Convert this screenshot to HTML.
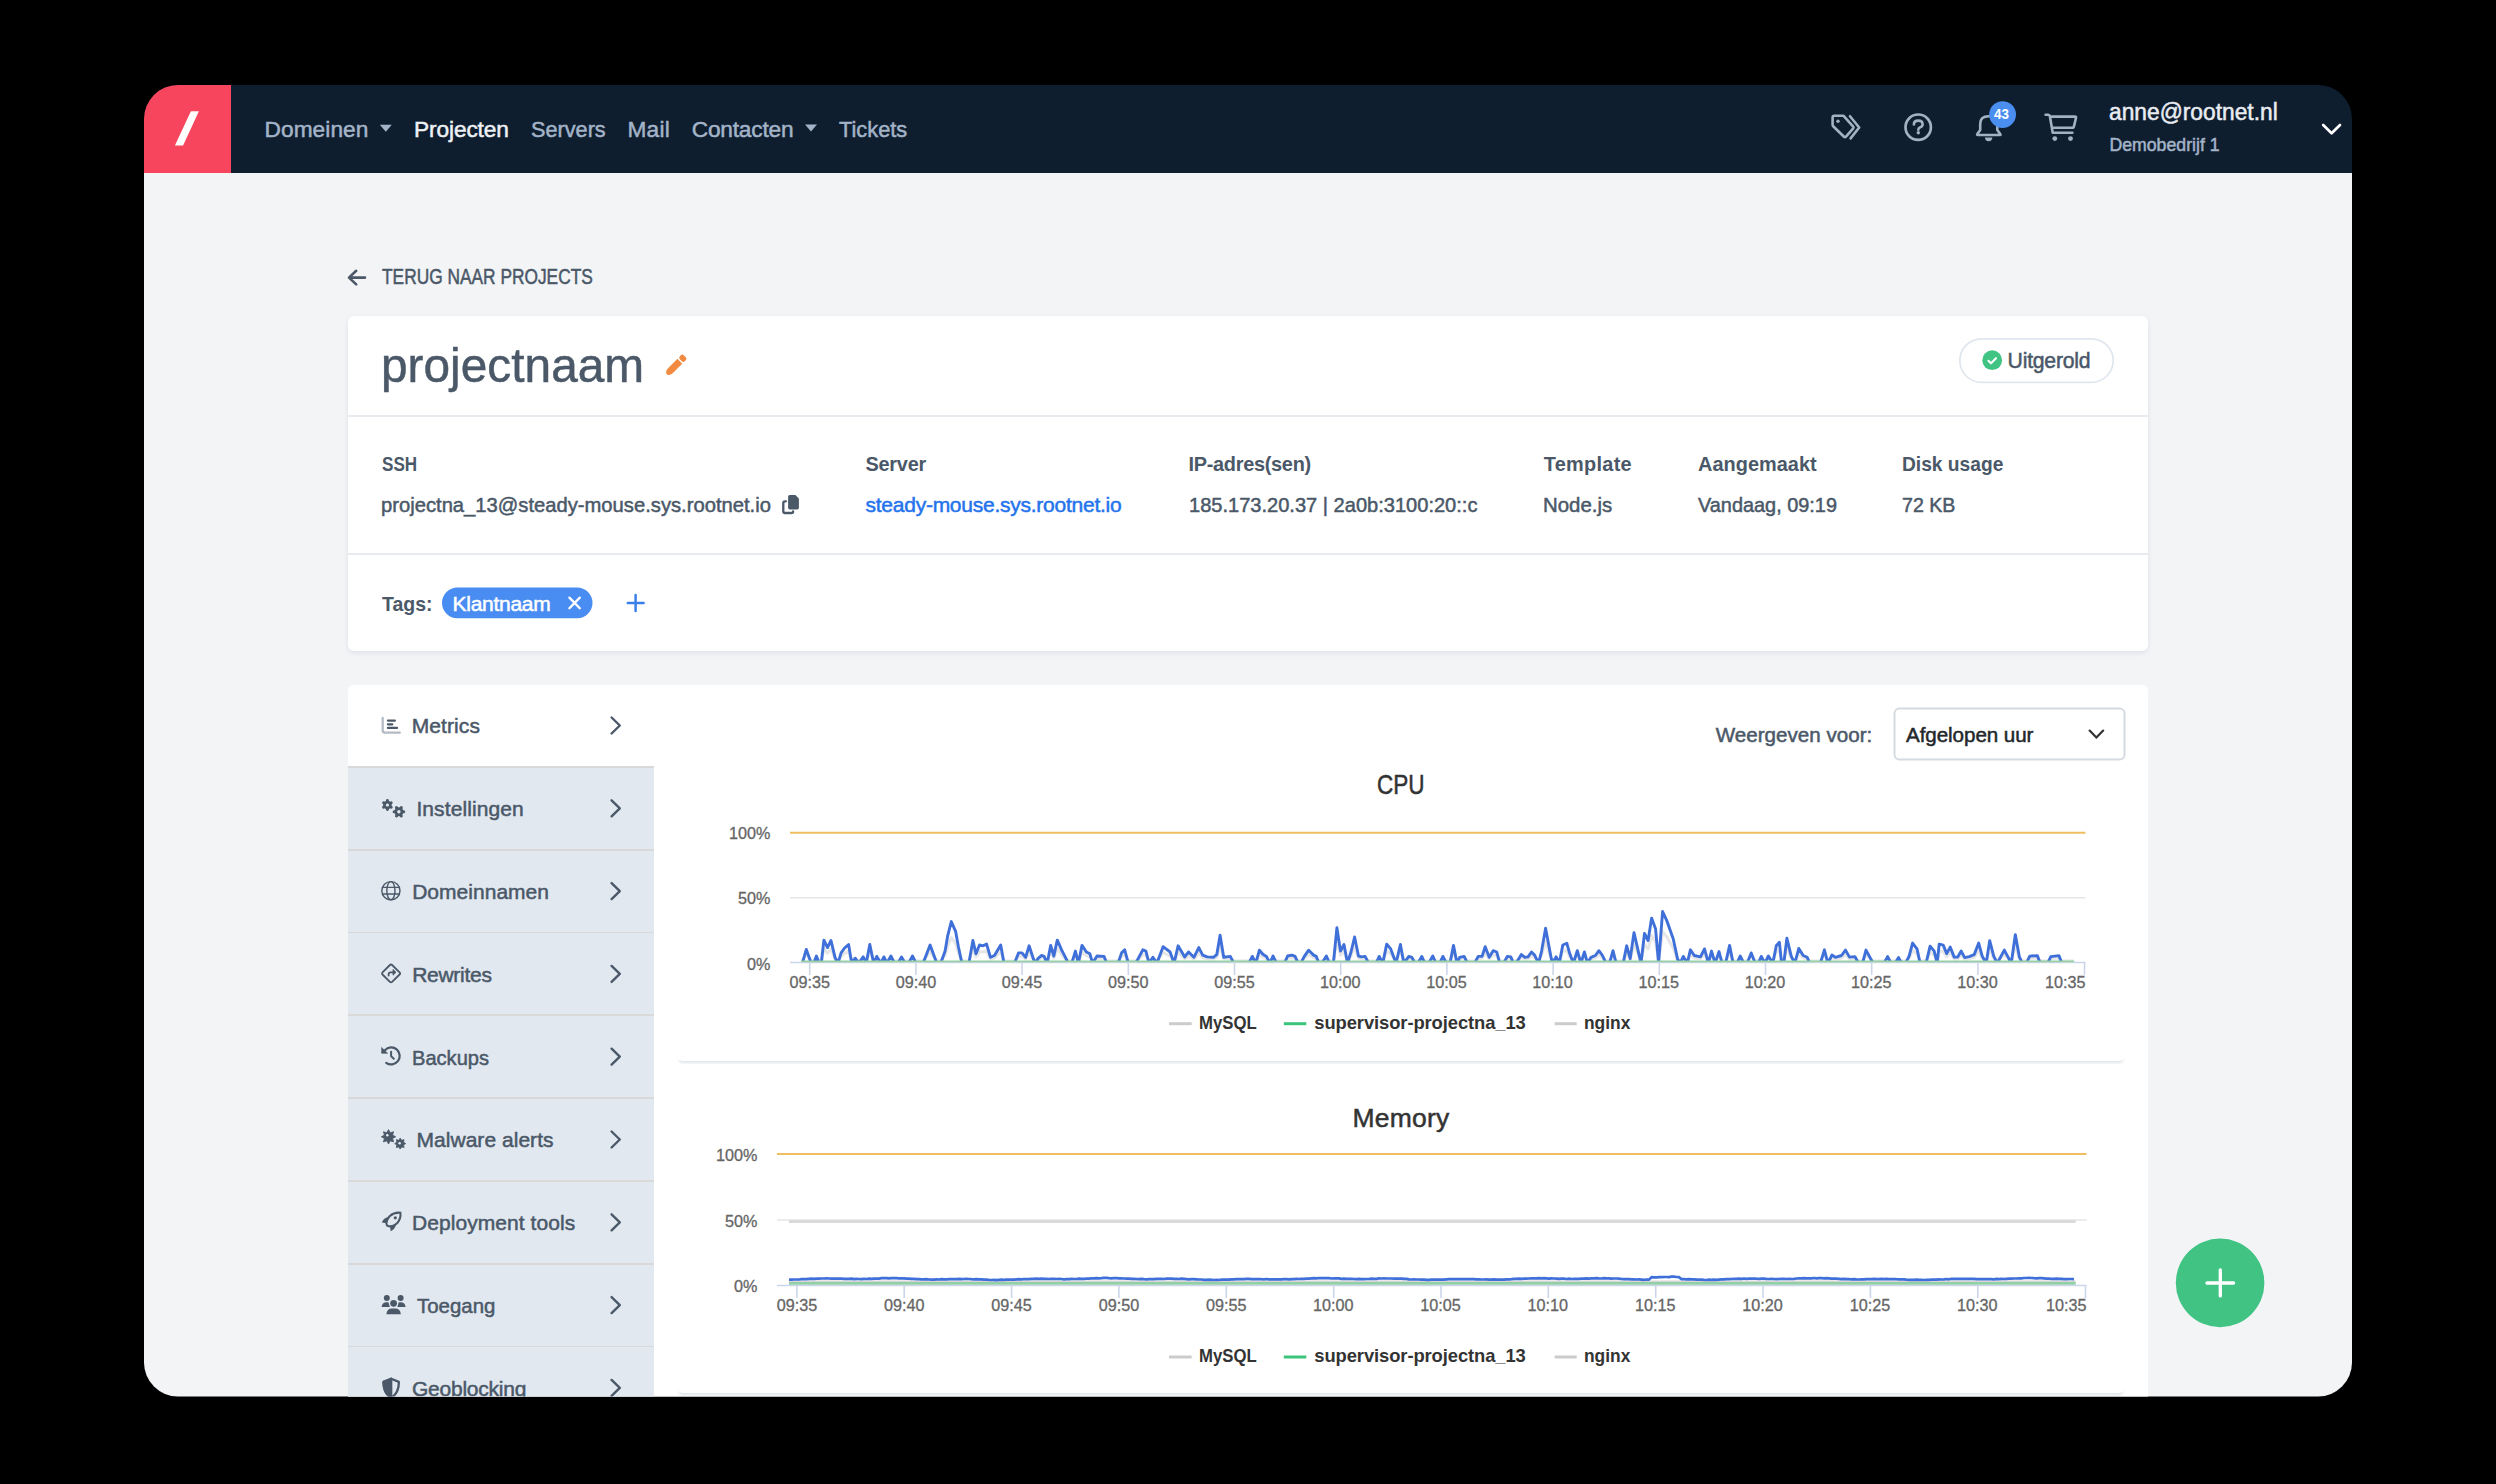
<!DOCTYPE html>
<html><head><meta charset="utf-8"><title>projectnaam</title>
<style>
html,body{margin:0;padding:0;background:#000;width:2496px;height:1484px;overflow:hidden}
#frame{position:absolute;left:0;top:0;width:2496px;height:1484px;clip-path:inset(85px 144px 87.5px 144px round 34px)}
.t{position:absolute;white-space:pre;font-family:"Liberation Sans",sans-serif}
.b{position:absolute}
svg{position:absolute;left:0;top:0}
</style></head><body>
<div id="frame">
 <div class="b" style="left:0;top:172px;width:2496px;height:1312px;background:#f3f4f6"></div>
 <div class="b" style="left:0;top:80px;width:2496px;height:93px;background:#0f1e2f"></div>
 <div class="b" style="left:0;top:80px;width:231.2px;height:93px;background:#f7455d"></div>
 <div class="b" style="left:348px;top:316px;width:1800px;height:335px;background:#fff;border-radius:6px;box-shadow:0 2px 5px rgba(40,70,110,0.10)"></div>
 <div class="b" style="left:348px;top:414.6px;width:1800px;height:2px;background:#e8ecf1"></div>
 <div class="b" style="left:348px;top:552.6px;width:1800px;height:2px;background:#e8ecf1"></div>
 <div class="b" style="left:348px;top:685px;width:1800px;height:900px;background:#fff;border-radius:6px"></div>
 <div class="b" style="left:348px;top:766px;width:306px;height:800px;background:#e2e8f0"></div>
 <div style="position:absolute;left:348px;top:766.0px;width:306px;height:1.8px;background:#d9d9d9"></div><div style="position:absolute;left:348px;top:848.8px;width:306px;height:1.8px;background:#d9d9d9"></div><div style="position:absolute;left:348px;top:931.6px;width:306px;height:1.8px;background:#d9d9d9"></div><div style="position:absolute;left:348px;top:1014.4px;width:306px;height:1.8px;background:#d9d9d9"></div><div style="position:absolute;left:348px;top:1097.2px;width:306px;height:1.8px;background:#d9d9d9"></div><div style="position:absolute;left:348px;top:1180.0px;width:306px;height:1.8px;background:#d9d9d9"></div><div style="position:absolute;left:348px;top:1262.8px;width:306px;height:1.8px;background:#d9d9d9"></div><div style="position:absolute;left:348px;top:1345.6px;width:306px;height:1.8px;background:#d9d9d9"></div>
 <div class="b" style="left:677px;top:700px;width:1448px;height:361px;background:#fff;border-radius:6px;box-shadow:0 4px 3px -2px rgba(40,70,110,0.15)"></div>
 <div class="b" style="left:677px;top:1064px;width:1448px;height:329px;background:#fff;border-radius:6px;box-shadow:0 4px 3px -2px rgba(40,70,110,0.15)"></div>
 <svg width="2496" height="1484" viewBox="0 0 2496 1484">
 <line x1="790" y1="832.8" x2="2085.5" y2="832.8" stroke="#f0bd60" stroke-width="1.9"/><line x1="790" y1="897.8" x2="2085.5" y2="897.8" stroke="#e6e6e6" stroke-width="1.6"/><line x1="790" y1="962.5" x2="2085.5" y2="962.5" stroke="#ccd6eb" stroke-width="1.6"/><line x1="809.7" y1="962.5" x2="809.7" y2="975.0" stroke="#ccd6eb" stroke-width="1.6"/><line x1="915.9" y1="962.5" x2="915.9" y2="975.0" stroke="#ccd6eb" stroke-width="1.6"/><line x1="1022.1" y1="962.5" x2="1022.1" y2="975.0" stroke="#ccd6eb" stroke-width="1.6"/><line x1="1128.3" y1="962.5" x2="1128.3" y2="975.0" stroke="#ccd6eb" stroke-width="1.6"/><line x1="1234.5" y1="962.5" x2="1234.5" y2="975.0" stroke="#ccd6eb" stroke-width="1.6"/><line x1="1340.7" y1="962.5" x2="1340.7" y2="975.0" stroke="#ccd6eb" stroke-width="1.6"/><line x1="1446.9" y1="962.5" x2="1446.9" y2="975.0" stroke="#ccd6eb" stroke-width="1.6"/><line x1="1553.1" y1="962.5" x2="1553.1" y2="975.0" stroke="#ccd6eb" stroke-width="1.6"/><line x1="1659.3" y1="962.5" x2="1659.3" y2="975.0" stroke="#ccd6eb" stroke-width="1.6"/><line x1="1765.5" y1="962.5" x2="1765.5" y2="975.0" stroke="#ccd6eb" stroke-width="1.6"/><line x1="1871.7" y1="962.5" x2="1871.7" y2="975.0" stroke="#ccd6eb" stroke-width="1.6"/><line x1="1977.9" y1="962.5" x2="1977.9" y2="975.0" stroke="#ccd6eb" stroke-width="1.6"/><line x1="2084.5" y1="962.5" x2="2084.5" y2="975.0" stroke="#ccd6eb" stroke-width="1.6"/><line x1="777" y1="1154" x2="2086.5" y2="1154" stroke="#f0bd60" stroke-width="1.9"/><line x1="777" y1="1220" x2="2086.5" y2="1220" stroke="#e6e6e6" stroke-width="1.6"/><line x1="777" y1="1285.5" x2="2086.5" y2="1285.5" stroke="#ccd6eb" stroke-width="1.6"/><line x1="796.9" y1="1285.5" x2="796.9" y2="1298.0" stroke="#ccd6eb" stroke-width="1.6"/><line x1="904.2" y1="1285.5" x2="904.2" y2="1298.0" stroke="#ccd6eb" stroke-width="1.6"/><line x1="1011.6" y1="1285.5" x2="1011.6" y2="1298.0" stroke="#ccd6eb" stroke-width="1.6"/><line x1="1118.9" y1="1285.5" x2="1118.9" y2="1298.0" stroke="#ccd6eb" stroke-width="1.6"/><line x1="1226.3" y1="1285.5" x2="1226.3" y2="1298.0" stroke="#ccd6eb" stroke-width="1.6"/><line x1="1333.7" y1="1285.5" x2="1333.7" y2="1298.0" stroke="#ccd6eb" stroke-width="1.6"/><line x1="1441.0" y1="1285.5" x2="1441.0" y2="1298.0" stroke="#ccd6eb" stroke-width="1.6"/><line x1="1548.3" y1="1285.5" x2="1548.3" y2="1298.0" stroke="#ccd6eb" stroke-width="1.6"/><line x1="1655.7" y1="1285.5" x2="1655.7" y2="1298.0" stroke="#ccd6eb" stroke-width="1.6"/><line x1="1763.0" y1="1285.5" x2="1763.0" y2="1298.0" stroke="#ccd6eb" stroke-width="1.6"/><line x1="1870.4" y1="1285.5" x2="1870.4" y2="1298.0" stroke="#ccd6eb" stroke-width="1.6"/><line x1="1977.8" y1="1285.5" x2="1977.8" y2="1298.0" stroke="#ccd6eb" stroke-width="1.6"/><line x1="2085.5" y1="1285.5" x2="2085.5" y2="1298.0" stroke="#ccd6eb" stroke-width="1.6"/><path d="M802.3,961.1 L806.3,954.2 L811.2,960.6 L813.8,960.8 L816.4,958.2 L819.1,960.6 L821.3,960.8 L823.9,948.7 L827.5,953.2 L831.0,948.9 L835.0,959.0 L838.0,961.1 L841.1,956.3 L844.6,953.4 L848.6,951.3 L851.7,960.6 L855.2,959.5 L858.8,960.6 L863.2,958.7 L866.2,960.6 L869.8,951.3 L873.7,961.1 L876.8,958.4 L880.8,960.8 L883.9,958.7 L887.0,960.8 L890.9,958.2 L894.5,961.1 L898.0,961.1 L901.5,958.7 L905.0,961.1 L908.6,961.1 L912.5,958.2 L916.0,961.1 L923.1,961.1 L930.1,951.6 L936.8,961.1 L940.7,961.1 L945.1,955.3 L947.8,945.8 L951.3,937.6 L955.7,943.6 L958.4,952.6 L961.9,961.1 L968.9,961.1 L972.9,948.9 L976.0,956.9 L979.5,951.6 L983.0,952.1 L986.6,951.0 L990.5,959.0 L994.5,957.9 L1000.7,951.6 L1004.0,961.1 L1014.5,961.1 L1018.5,956.3 L1022.0,956.3 L1025.6,959.0 L1029.1,952.1 L1033.5,960.0 L1036.1,961.1 L1037.9,959.8 L1041.4,957.9 L1044.1,958.4 L1047.2,960.8 L1050.7,951.8 L1053.8,958.2 L1057.3,948.7 L1061.7,954.7 L1064.3,957.7 L1068.3,961.1 L1071.8,961.1 L1075.4,955.3 L1078.4,961.1 L1082.0,951.8 L1086.4,955.8 L1089.9,956.9 L1092.6,960.8 L1097.0,958.2 L1104.0,958.4 L1106.7,961.1 L1118.1,961.1 L1121.6,956.3 L1124.7,954.5 L1128.3,961.1 L1135.7,961.1 L1138.4,959.5 L1142.8,954.5 L1145.9,955.3 L1149.0,960.6 L1152.9,959.0 L1156.9,960.8 L1163.1,952.6 L1170.1,955.8 L1174.1,961.1 L1178.1,952.1 L1184.7,958.7 L1188.6,955.8 L1193.9,959.0 L1198.8,953.2 L1202.7,957.7 L1207.1,958.7 L1213.3,959.0 L1216.8,957.4 L1220.1,945.8 L1223.7,959.0 L1230.3,958.4 L1233.8,961.1 L1248.8,961.1 L1252.3,958.4 L1255.8,960.8 L1259.4,954.7 L1262.9,957.1 L1266.4,958.4 L1269.9,961.1 L1273.0,958.2 L1276.5,961.1 L1284.5,961.1 L1287.6,958.2 L1292.0,957.7 L1295.1,958.4 L1298.1,961.1 L1300.8,961.1 L1304.3,958.4 L1308.7,954.7 L1313.6,957.7 L1316.2,958.4 L1318.9,961.1 L1321.9,961.1 L1326.4,958.2 L1329.4,961.1 L1333.4,961.1 L1336.9,941.3 L1340.5,955.3 L1344.0,951.3 L1347.5,961.1 L1351.0,955.8 L1354.6,946.8 L1358.5,958.2 L1361.6,958.7 L1365.1,958.4 L1368.7,961.1 L1376.2,961.1 L1379.2,958.4 L1382.8,961.1 L1386.7,951.0 L1390.7,954.0 L1396.0,961.1 L1400.4,951.3 L1403.9,961.1 L1408.8,958.4 L1411.9,959.0 L1414.9,961.1 L1418.0,961.1 L1421.8,958.4 L1424.8,961.1 L1428.8,961.1 L1432.8,958.2 L1435.9,961.1 L1439.8,961.1 L1442.9,958.4 L1446.4,961.1 L1450.0,961.1 L1453.5,951.8 L1457.0,961.1 L1459.7,959.0 L1464.1,958.4 L1467.6,961.1 L1474.6,961.1 L1478.2,958.4 L1482.1,958.4 L1485.2,952.6 L1489.2,959.0 L1493.2,955.0 L1496.7,955.8 L1499.8,961.1 L1503.7,961.1 L1507.3,958.4 L1510.8,958.7 L1513.4,961.1 L1516.1,961.1 L1521.4,957.4 L1524.9,959.0 L1528.0,958.7 L1531.5,955.8 L1534.6,957.7 L1538.6,961.1 L1541.6,955.3 L1545.6,941.5 L1549.6,954.5 L1552.2,961.1 L1556.2,958.7 L1559.3,961.1 L1562.8,951.6 L1566.8,950.5 L1569.8,956.9 L1573.4,961.1 L1577.3,955.0 L1580.9,961.1 L1584.4,955.8 L1587.5,961.1 L1591.0,959.0 L1595.4,957.9 L1598.9,955.0 L1602.5,957.9 L1606.0,961.1 L1609.5,961.1 L1613.0,955.0 L1616.1,961.1 L1623.2,961.1 L1626.7,952.1 L1630.2,959.8 L1634.0,944.2 L1641.0,960.8 L1644.5,944.7 L1648.1,948.9 L1651.6,935.4 L1655.6,942.1 L1658.6,961.1 L1662.6,931.5 L1667.0,937.3 L1673.2,947.9 L1677.6,960.0 L1680.2,961.1 L1683.3,958.4 L1687.3,960.8 L1690.4,954.5 L1694.3,957.9 L1700.5,958.7 L1704.5,954.0 L1708.4,961.1 L1711.5,955.3 L1715.1,961.1 L1719.0,955.5 L1722.1,961.1 L1725.6,961.1 L1729.6,951.8 L1733.1,961.1 L1737.1,961.1 L1740.2,958.2 L1743.7,961.1 L1747.2,961.1 L1751.2,956.3 L1755.2,960.6 L1758.3,961.1 L1761.3,958.4 L1764.9,961.1 L1768.4,958.2 L1772.8,961.1 L1776.3,952.1 L1779.4,950.0 L1781.6,960.6 L1783.8,961.1 L1786.9,947.6 L1791.3,958.4 L1794.8,961.1 L1798.8,953.7 L1803.2,957.9 L1807.2,959.0 L1809.8,961.1 L1820.4,961.1 L1824.4,954.5 L1827.9,961.1 L1831.9,957.7 L1835.4,959.0 L1841.5,957.9 L1845.5,954.6 L1849.5,958.9 L1855.0,958.6 L1858.5,961.0 L1862.5,961.0 L1866.0,954.6 L1873.1,961.0 L1879.1,961.0 L1884.1,961.0 L1887.6,958.6 L1891.1,961.0 L1895.1,961.0 L1898.6,959.2 L1901.6,961.0 L1905.6,961.0 L1909.1,958.3 L1912.6,950.4 L1917.1,954.0 L1920.1,961.0 L1926.1,961.0 L1930.1,952.2 L1934.2,955.2 L1937.2,961.0 L1939.2,951.0 L1943.2,951.6 L1946.7,956.8 L1950.2,952.8 L1954.2,958.9 L1957.7,958.9 L1961.2,955.2 L1964.7,959.2 L1969.2,958.6 L1974.2,957.4 L1978.7,950.4 L1982.2,958.3 L1986.2,961.0 L1989.7,948.9 L1993.7,958.3 L1997.3,960.7 L2004.3,954.6 L2011.3,961.0 L2015.3,945.3 L2019.3,958.6 L2022.3,961.0 L2026.3,961.0 L2029.8,958.3 L2037.3,958.0 L2040.3,961.0 L2047.8,961.0 L2050.8,958.6 L2058.9,958.0 L2061.9,961.0 L2073.9,961.0" fill="none" stroke="#e6e6e6" stroke-width="3" stroke-linejoin="round"/><defs><clipPath id="cpuclip"><rect x="780" y="800" width="1320" height="162.1"/></clipPath></defs><path clip-path="url(#cpuclip)" d="M802.3,963.2 L806.3,949.4 L811.2,963.2 L813.8,963.2 L816.4,956.0 L819.1,963.2 L821.3,963.2 L823.9,940.1 L827.5,947.6 L831.0,940.5 L835.0,957.3 L838.0,963.2 L841.1,952.9 L844.6,948.0 L848.6,944.5 L851.7,963.2 L855.2,958.2 L858.8,963.2 L863.2,956.9 L866.2,963.2 L869.8,944.5 L873.7,963.2 L876.8,956.4 L880.8,963.2 L883.9,956.9 L887.0,963.2 L890.9,956.0 L894.5,963.2 L898.0,963.2 L901.5,956.9 L905.0,963.2 L908.6,963.2 L912.5,956.0 L916.0,963.2 L923.1,963.2 L930.1,945.0 L936.8,963.2 L940.7,963.2 L945.1,951.1 L947.8,935.3 L951.3,921.6 L955.7,931.7 L958.4,946.7 L961.9,963.2 L968.9,963.2 L972.9,940.5 L976.0,953.8 L979.5,945.0 L983.0,945.8 L986.6,944.1 L990.5,957.3 L994.5,955.5 L1000.7,945.0 L1004.0,963.2 L1014.5,963.2 L1018.5,952.9 L1022.0,952.9 L1025.6,957.3 L1029.1,945.8 L1033.5,959.1 L1036.1,963.2 L1037.9,958.6 L1041.4,955.5 L1044.1,956.4 L1047.2,963.2 L1050.7,945.4 L1053.8,956.0 L1057.3,940.1 L1061.7,950.2 L1064.3,955.1 L1068.3,963.2 L1071.8,963.2 L1075.4,951.1 L1078.4,963.2 L1082.0,945.4 L1086.4,952.0 L1089.9,953.8 L1092.6,963.2 L1097.0,956.0 L1104.0,956.4 L1106.7,963.2 L1118.1,963.2 L1121.6,952.9 L1124.7,949.8 L1128.3,963.2 L1135.7,963.2 L1138.4,958.2 L1142.8,949.8 L1145.9,951.1 L1149.0,963.2 L1152.9,957.3 L1156.9,963.2 L1163.1,946.7 L1170.1,952.0 L1174.1,963.2 L1178.1,945.8 L1184.7,956.9 L1188.6,952.0 L1193.9,957.3 L1198.8,947.6 L1202.7,955.1 L1207.1,956.9 L1213.3,957.3 L1216.8,954.6 L1220.1,935.3 L1223.7,957.3 L1230.3,956.4 L1233.8,963.2 L1248.8,963.2 L1252.3,956.4 L1255.8,963.2 L1259.4,950.2 L1262.9,954.2 L1266.4,956.4 L1269.9,963.2 L1273.0,956.0 L1276.5,963.2 L1284.5,963.2 L1287.6,956.0 L1292.0,955.1 L1295.1,956.4 L1298.1,963.2 L1300.8,963.2 L1304.3,956.4 L1308.7,950.2 L1313.6,955.1 L1316.2,956.4 L1318.9,963.2 L1321.9,963.2 L1326.4,956.0 L1329.4,963.2 L1333.4,963.2 L1336.9,927.8 L1340.5,951.1 L1344.0,944.5 L1347.5,963.2 L1351.0,952.0 L1354.6,937.0 L1358.5,956.0 L1361.6,956.9 L1365.1,956.4 L1368.7,963.2 L1376.2,963.2 L1379.2,956.4 L1382.8,963.2 L1386.7,944.1 L1390.7,948.9 L1396.0,963.2 L1400.4,944.5 L1403.9,963.2 L1408.8,956.4 L1411.9,957.3 L1414.9,963.2 L1418.0,963.2 L1421.8,956.4 L1424.8,963.2 L1428.8,963.2 L1432.8,956.0 L1435.9,963.2 L1439.8,963.2 L1442.9,956.4 L1446.4,963.2 L1450.0,963.2 L1453.5,945.4 L1457.0,963.2 L1459.7,957.3 L1464.1,956.4 L1467.6,963.2 L1474.6,963.2 L1478.2,956.4 L1482.1,956.4 L1485.2,946.7 L1489.2,957.3 L1493.2,950.7 L1496.7,952.0 L1499.8,963.2 L1503.7,963.2 L1507.3,956.4 L1510.8,956.9 L1513.4,963.2 L1516.1,963.2 L1521.4,954.6 L1524.9,957.3 L1528.0,956.9 L1531.5,952.0 L1534.6,955.1 L1538.6,963.2 L1541.6,951.1 L1545.6,928.2 L1549.6,949.8 L1552.2,963.2 L1556.2,956.9 L1559.3,963.2 L1562.8,945.0 L1566.8,943.2 L1569.8,953.8 L1573.4,963.2 L1577.3,950.7 L1580.9,963.2 L1584.4,952.0 L1587.5,963.2 L1591.0,957.3 L1595.4,955.5 L1598.9,950.7 L1602.5,955.5 L1606.0,963.2 L1609.5,963.2 L1613.0,950.7 L1616.1,963.2 L1623.2,963.2 L1626.7,945.8 L1630.2,958.6 L1634.0,932.6 L1641.0,963.2 L1644.5,933.5 L1648.1,940.5 L1651.6,918.1 L1655.6,929.1 L1658.6,963.2 L1662.6,911.5 L1667.0,921.2 L1673.2,938.8 L1677.6,959.1 L1680.2,963.2 L1683.3,956.4 L1687.3,963.2 L1690.4,949.8 L1694.3,955.5 L1700.5,956.9 L1704.5,948.9 L1708.4,963.2 L1711.5,951.1 L1715.1,963.2 L1719.0,951.6 L1722.1,963.2 L1725.6,963.2 L1729.6,945.4 L1733.1,963.2 L1737.1,963.2 L1740.2,956.0 L1743.7,963.2 L1747.2,963.2 L1751.2,952.9 L1755.2,963.2 L1758.3,963.2 L1761.3,956.4 L1764.9,963.2 L1768.4,956.0 L1772.8,963.2 L1776.3,945.8 L1779.4,942.3 L1781.6,963.2 L1783.8,963.2 L1786.9,938.3 L1791.3,956.4 L1794.8,963.2 L1798.8,948.5 L1803.2,955.5 L1807.2,957.3 L1809.8,963.2 L1820.4,963.2 L1824.4,949.8 L1827.9,963.2 L1831.9,955.1 L1835.4,957.3 L1841.5,955.5 L1845.5,950.1 L1849.5,957.1 L1855.0,956.6 L1858.5,963.2 L1862.5,963.2 L1866.0,950.1 L1873.1,963.2 L1879.1,963.2 L1884.1,963.2 L1887.6,956.6 L1891.1,963.2 L1895.1,963.2 L1898.6,957.6 L1901.6,963.2 L1905.6,963.2 L1909.1,956.1 L1912.6,943.1 L1917.1,949.1 L1920.1,963.2 L1926.1,963.2 L1930.1,946.1 L1934.2,951.1 L1937.2,963.2 L1939.2,944.1 L1943.2,945.1 L1946.7,953.6 L1950.2,947.1 L1954.2,957.1 L1957.7,957.1 L1961.2,951.1 L1964.7,957.6 L1969.2,956.6 L1974.2,954.6 L1978.7,943.1 L1982.2,956.1 L1986.2,963.2 L1989.7,940.6 L1993.7,956.1 L1997.3,963.2 L2004.3,950.1 L2011.3,963.2 L2015.3,934.6 L2019.3,956.6 L2022.3,963.2 L2026.3,963.2 L2029.8,956.1 L2037.3,955.6 L2040.3,963.2 L2047.8,963.2 L2050.8,956.6 L2058.9,955.6 L2061.9,963.2 L2073.9,963.2" fill="none" stroke="#3f6fd8" stroke-width="2.9" stroke-linejoin="round" stroke-linecap="round"/><line x1="801" y1="961.4" x2="2074" y2="961.4" stroke="#96d0a4" stroke-width="1.6"/><line x1="789" y1="1221.6" x2="2075.7" y2="1221.6" stroke="#dadada" stroke-width="3"/><line x1="789" y1="1283.2" x2="2075.7" y2="1283.2" stroke="#93cfa6" stroke-width="3"/><line x1="789" y1="1281.2" x2="2075.7" y2="1281.2" stroke="#d6d6d6" stroke-width="1.5"/><path d="M789.0,1279.6 L791.5,1279.7 L794.0,1279.5 L796.5,1279.5 L799.0,1279.5 L801.5,1279.1 L804.0,1279.0 L806.5,1279.2 L809.0,1278.8 L811.5,1278.7 L814.0,1278.9 L816.5,1278.6 L819.0,1278.7 L821.5,1278.5 L824.0,1278.5 L826.5,1278.3 L829.0,1278.5 L831.5,1278.6 L834.0,1278.5 L836.5,1278.7 L839.0,1278.7 L841.5,1278.5 L844.0,1278.9 L846.5,1278.8 L849.0,1278.8 L851.5,1278.7 L854.0,1279.1 L856.5,1278.9 L859.0,1279.0 L861.5,1279.1 L864.0,1278.9 L866.5,1279.0 L869.0,1278.7 L871.5,1278.8 L874.0,1278.6 L876.5,1278.7 L879.0,1278.6 L881.5,1278.2 L884.0,1278.1 L886.5,1278.1 L889.0,1278.4 L891.5,1278.2 L894.0,1278.2 L896.5,1278.1 L899.0,1278.3 L901.5,1278.3 L904.0,1278.4 L906.5,1278.6 L909.0,1278.7 L911.5,1278.9 L914.0,1278.9 L916.5,1279.2 L919.0,1279.2 L921.5,1279.4 L924.0,1279.3 L926.5,1279.2 L929.0,1279.5 L931.5,1279.6 L934.0,1279.6 L936.5,1279.4 L939.0,1279.5 L941.5,1279.2 L944.0,1279.4 L946.5,1279.3 L949.0,1279.1 L951.5,1279.0 L954.0,1279.2 L956.5,1279.2 L959.0,1278.8 L961.5,1279.1 L964.0,1279.0 L966.5,1278.9 L969.0,1279.0 L971.5,1279.2 L974.0,1279.3 L976.5,1279.1 L979.0,1279.4 L981.5,1279.3 L984.0,1279.6 L986.5,1279.6 L989.0,1279.9 L991.5,1280.0 L994.0,1279.8 L996.5,1280.1 L999.0,1279.8 L1001.5,1279.7 L1004.0,1279.9 L1006.5,1279.6 L1009.0,1279.6 L1011.5,1279.6 L1014.0,1279.6 L1016.5,1279.3 L1019.0,1279.1 L1021.5,1279.3 L1024.0,1279.0 L1026.5,1279.2 L1029.0,1279.1 L1031.5,1278.8 L1034.0,1278.8 L1036.5,1278.7 L1039.0,1278.8 L1041.5,1278.7 L1044.0,1278.8 L1046.5,1278.8 L1049.0,1279.0 L1051.5,1278.9 L1054.0,1278.9 L1056.5,1279.0 L1059.0,1278.9 L1061.5,1279.0 L1064.0,1279.3 L1066.5,1279.1 L1069.0,1279.1 L1071.5,1278.9 L1074.0,1279.0 L1076.5,1279.0 L1079.0,1278.7 L1081.5,1278.9 L1084.0,1278.8 L1086.5,1278.5 L1089.0,1278.6 L1091.5,1278.4 L1094.0,1278.4 L1096.5,1278.2 L1099.0,1278.3 L1101.5,1278.2 L1104.0,1277.9 L1106.5,1277.9 L1109.0,1278.2 L1111.5,1278.3 L1114.0,1278.1 L1116.5,1278.2 L1119.0,1278.4 L1121.5,1278.4 L1124.0,1278.5 L1126.5,1278.6 L1129.0,1278.7 L1131.5,1278.9 L1134.0,1278.9 L1136.5,1279.0 L1139.0,1279.2 L1141.5,1278.9 L1144.0,1279.2 L1146.5,1279.3 L1149.0,1279.1 L1151.5,1279.0 L1154.0,1279.2 L1156.5,1278.9 L1159.0,1278.9 L1161.5,1278.9 L1164.0,1279.0 L1166.5,1278.7 L1169.0,1278.7 L1171.5,1278.7 L1174.0,1278.9 L1176.5,1278.8 L1179.0,1279.0 L1181.5,1278.7 L1184.0,1278.9 L1186.5,1279.1 L1189.0,1279.3 L1191.5,1279.2 L1194.0,1279.2 L1196.5,1279.3 L1199.0,1279.5 L1201.5,1279.5 L1204.0,1279.8 L1206.5,1279.9 L1209.0,1279.7 L1211.5,1279.8 L1214.0,1280.0 L1216.5,1279.9 L1219.0,1280.0 L1221.5,1279.7 L1224.0,1279.6 L1226.5,1279.6 L1229.0,1279.7 L1231.5,1279.4 L1234.0,1279.3 L1236.5,1279.2 L1239.0,1279.2 L1241.5,1279.1 L1244.0,1279.2 L1246.5,1278.9 L1249.0,1278.8 L1251.5,1279.1 L1254.0,1279.1 L1256.5,1279.2 L1259.0,1279.0 L1261.5,1279.2 L1264.0,1279.3 L1266.5,1279.0 L1269.0,1279.3 L1271.5,1279.4 L1274.0,1279.4 L1276.5,1279.3 L1279.0,1279.3 L1281.5,1279.3 L1284.0,1279.2 L1286.5,1279.1 L1289.0,1279.3 L1291.5,1279.1 L1294.0,1279.2 L1296.5,1278.8 L1299.0,1279.0 L1301.5,1278.8 L1304.0,1278.8 L1306.5,1278.7 L1309.0,1278.6 L1311.5,1278.3 L1314.0,1278.1 L1316.5,1278.3 L1319.0,1278.0 L1321.5,1278.1 L1324.0,1278.2 L1326.5,1278.2 L1329.0,1278.2 L1331.5,1278.5 L1334.0,1278.4 L1336.5,1278.4 L1339.0,1278.4 L1341.5,1278.8 L1344.0,1278.7 L1346.5,1278.9 L1349.0,1278.8 L1351.5,1278.8 L1354.0,1279.0 L1356.5,1279.1 L1359.0,1278.8 L1361.5,1279.1 L1364.0,1279.1 L1366.5,1279.0 L1369.0,1279.0 L1371.5,1278.6 L1374.0,1278.8 L1376.5,1278.8 L1379.0,1278.4 L1381.5,1278.5 L1384.0,1278.4 L1386.5,1278.5 L1389.0,1278.5 L1391.5,1278.5 L1394.0,1278.7 L1396.5,1278.5 L1399.0,1278.6 L1401.5,1278.7 L1404.0,1278.8 L1406.5,1278.9 L1409.0,1279.4 L1411.5,1279.5 L1414.0,1279.3 L1416.5,1279.5 L1419.0,1279.5 L1421.5,1279.6 L1424.0,1279.7 L1426.5,1279.8 L1429.0,1279.8 L1431.5,1279.7 L1434.0,1279.6 L1436.5,1279.6 L1439.0,1279.5 L1441.5,1279.6 L1444.0,1279.6 L1446.5,1279.4 L1449.0,1279.2 L1451.5,1279.1 L1454.0,1279.1 L1456.5,1279.2 L1459.0,1279.2 L1461.5,1279.0 L1464.0,1279.2 L1466.5,1279.1 L1469.0,1279.1 L1471.5,1279.1 L1474.0,1279.2 L1476.5,1279.4 L1479.0,1279.3 L1481.5,1279.5 L1484.0,1279.5 L1486.5,1279.4 L1489.0,1279.6 L1491.5,1279.7 L1494.0,1279.4 L1496.5,1279.6 L1499.0,1279.5 L1501.5,1279.7 L1504.0,1279.6 L1506.5,1279.3 L1509.0,1279.4 L1511.5,1279.2 L1514.0,1278.9 L1516.5,1278.9 L1519.0,1278.6 L1521.5,1278.8 L1524.0,1278.6 L1526.5,1278.6 L1529.0,1278.5 L1531.5,1278.4 L1534.0,1278.4 L1536.5,1278.3 L1539.0,1278.2 L1541.5,1278.4 L1544.0,1278.2 L1546.5,1278.3 L1549.0,1278.6 L1551.5,1278.4 L1554.0,1278.5 L1556.5,1278.6 L1559.0,1278.9 L1561.5,1278.7 L1564.0,1278.7 L1566.5,1279.0 L1569.0,1278.7 L1571.5,1279.0 L1574.0,1278.9 L1576.5,1278.9 L1579.0,1278.9 L1581.5,1278.7 L1584.0,1278.7 L1586.5,1278.4 L1589.0,1278.6 L1591.5,1278.4 L1594.0,1278.4 L1596.5,1278.2 L1599.0,1278.4 L1601.5,1278.5 L1604.0,1278.1 L1606.5,1278.3 L1609.0,1278.4 L1611.5,1278.6 L1614.0,1278.5 L1616.5,1278.5 L1619.0,1278.7 L1621.5,1279.0 L1624.0,1279.1 L1626.5,1279.1 L1629.0,1279.2 L1631.5,1279.3 L1634.0,1279.4 L1636.5,1279.5 L1639.0,1279.4 L1641.5,1279.6 L1644.0,1279.8 L1646.5,1279.5 L1649.0,1279.6 L1651.5,1277.2 L1654.0,1277.3 L1656.5,1277.3 L1659.0,1277.2 L1661.5,1277.1 L1664.0,1277.0 L1666.5,1277.0 L1669.0,1277.1 L1671.5,1276.7 L1674.0,1276.7 L1676.5,1277.0 L1679.0,1277.1 L1681.5,1279.2 L1684.0,1279.2 L1686.5,1279.4 L1689.0,1279.2 L1691.5,1279.4 L1694.0,1279.4 L1696.5,1279.6 L1699.0,1279.6 L1701.5,1279.6 L1704.0,1279.9 L1706.5,1280.0 L1709.0,1279.7 L1711.5,1279.9 L1714.0,1279.7 L1716.5,1279.8 L1719.0,1279.6 L1721.5,1279.4 L1724.0,1279.3 L1726.5,1279.1 L1729.0,1279.2 L1731.5,1279.0 L1734.0,1278.8 L1736.5,1278.8 L1739.0,1278.7 L1741.5,1278.8 L1744.0,1278.5 L1746.5,1278.8 L1749.0,1278.5 L1751.5,1278.6 L1754.0,1278.5 L1756.5,1278.7 L1759.0,1278.8 L1761.5,1278.7 L1764.0,1278.7 L1766.5,1278.9 L1769.0,1279.0 L1771.5,1278.9 L1774.0,1279.0 L1776.5,1279.2 L1779.0,1279.0 L1781.5,1278.9 L1784.0,1278.8 L1786.5,1279.0 L1789.0,1278.9 L1791.5,1279.0 L1794.0,1278.8 L1796.5,1278.5 L1799.0,1278.4 L1801.5,1278.3 L1804.0,1278.2 L1806.5,1278.3 L1809.0,1278.3 L1811.5,1278.3 L1814.0,1278.0 L1816.5,1278.3 L1819.0,1278.1 L1821.5,1278.2 L1824.0,1278.4 L1826.5,1278.2 L1829.0,1278.3 L1831.5,1278.7 L1834.0,1278.6 L1836.5,1278.7 L1839.0,1278.9 L1841.5,1279.1 L1844.0,1278.9 L1846.5,1279.1 L1849.0,1279.2 L1851.5,1279.3 L1854.0,1279.2 L1856.5,1279.4 L1859.0,1279.5 L1861.5,1279.3 L1864.0,1279.3 L1866.5,1279.1 L1869.0,1279.1 L1871.5,1279.2 L1874.0,1278.9 L1876.5,1279.2 L1879.0,1279.1 L1881.5,1278.8 L1884.0,1279.1 L1886.5,1278.9 L1889.0,1279.1 L1891.5,1279.1 L1894.0,1279.0 L1896.5,1279.2 L1899.0,1279.3 L1901.5,1279.4 L1904.0,1279.3 L1906.5,1279.6 L1909.0,1279.8 L1911.5,1279.8 L1914.0,1279.8 L1916.5,1279.7 L1919.0,1279.9 L1921.5,1279.8 L1924.0,1280.0 L1926.5,1279.9 L1929.0,1279.9 L1931.5,1279.6 L1934.0,1279.7 L1936.5,1279.7 L1939.0,1279.4 L1941.5,1279.5 L1944.0,1279.3 L1946.5,1279.0 L1949.0,1279.3 L1951.5,1278.8 L1954.0,1278.9 L1956.5,1278.9 L1959.0,1278.9 L1961.5,1278.8 L1964.0,1278.9 L1966.5,1278.8 L1969.0,1278.8 L1971.5,1278.8 L1974.0,1278.8 L1976.5,1279.1 L1979.0,1279.1 L1981.5,1279.1 L1984.0,1279.2 L1986.5,1279.1 L1989.0,1279.1 L1991.5,1279.1 L1994.0,1279.3 L1996.5,1278.9 L1999.0,1279.1 L2001.5,1278.9 L2004.0,1279.0 L2006.5,1278.8 L2009.0,1278.7 L2011.5,1278.6 L2014.0,1278.5 L2016.5,1278.5 L2019.0,1278.3 L2021.5,1278.4 L2024.0,1278.0 L2026.5,1278.0 L2029.0,1277.9 L2031.5,1278.0 L2034.0,1278.2 L2036.5,1278.3 L2039.0,1278.1 L2041.5,1278.2 L2044.0,1278.4 L2046.5,1278.6 L2049.0,1278.7 L2051.5,1278.8 L2054.0,1278.8 L2056.5,1278.7 L2059.0,1278.9 L2061.5,1278.9 L2064.0,1279.1 L2066.5,1279.1 L2069.0,1279.0 L2071.5,1279.0 L2074.0,1279.2" fill="none" stroke="#3f6fd8" stroke-width="2.7" stroke-linejoin="round"/><line x1="1169" y1="1023.7" x2="1191.7" y2="1023.7" stroke="#cccccc" stroke-width="3"/><line x1="1283.8" y1="1023.7" x2="1306.3" y2="1023.7" stroke="#3cc47c" stroke-width="3"/><line x1="1554.6" y1="1023.7" x2="1576.7" y2="1023.7" stroke="#cccccc" stroke-width="3"/><line x1="1169" y1="1357" x2="1191.7" y2="1357" stroke="#cccccc" stroke-width="3"/><line x1="1283.8" y1="1357" x2="1306.3" y2="1357" stroke="#3cc47c" stroke-width="3"/><line x1="1554.6" y1="1357" x2="1576.7" y2="1357" stroke="#cccccc" stroke-width="3"/>
 <polygon points="174.9,145.6 183.1,145.6 198.9,111.2 190.9,111.2" fill="#ffffff"/><polygon points="379.8,124.8 391.8,124.8 385.8,131.7" fill="#a3b4c8"/><polygon points="805,124.6 817,124.6 811,131.5" fill="#a3b4c8"/><path d="M1834.2,115.8 H1843.6 L1853.2,126.6 Q1853.9,127.5 1853.2,128.4 L1846,136.6 Q1845,137.6 1844,136.7 L1833.2,126.2 Q1832.6,125.6 1832.6,124.8 V117.4 Q1832.6,115.8 1834.2,115.8 Z" fill="none" stroke="#a3b1c4" stroke-width="2.6" stroke-linejoin="round"/><circle cx="1838" cy="121.3" r="1.7" fill="#a3b1c4"/><polyline points="1850,116.2 1859.2,127.5 1850.6,138.4" fill="none" stroke="#a3b1c4" stroke-width="2.6" stroke-linecap="round" stroke-linejoin="round"/><circle cx="1918.2" cy="127.2" r="12.7" fill="none" stroke="#a3b1c4" stroke-width="2.7"/><path d="M1913.9,124.4 Q1913.9,120.6 1918.2,120.6 Q1922.6,120.6 1922.6,124.2 Q1922.6,126.4 1920.3,127.3 Q1918.3,128.1 1918.3,129.8" fill="none" stroke="#a3b1c4" stroke-width="2.6" stroke-linecap="round"/><circle cx="1918.3" cy="132.8" r="1.7" fill="#a3b1c4"/><path d="M1978,135 H2000 Q2001,135 2000.2,134 L1997.3,130 V124 Q1997.3,116.3 1988.7,116.3 Q1980.2,116.3 1980.2,124 V130 L1977.3,134 Q1976.6,135 1978,135 Z" fill="none" stroke="#a3b1c4" stroke-width="2.6" stroke-linejoin="round"/><path d="M1985,137.5 A3.6,3.6 0 0 0 1992.3,137.5 Z" fill="#a3b1c4"/><circle cx="2002.6" cy="114.6" r="13.4" fill="#4a8ff0"/><path d="M2045.6,114.7 H2048.2 Q2049.6,114.7 2049.9,116.2 L2052.7,132.8 H2072.4" fill="none" stroke="#a3b1c4" stroke-width="2.6" stroke-linecap="round" stroke-linejoin="round"/><path d="M2049.6,116.6 H2075.2 Q2076.3,116.6 2076,117.8 L2073.9,126.6 Q2073.6,127.8 2072.3,127.8 H2051.6" fill="none" stroke="#a3b1c4" stroke-width="2.6" stroke-linejoin="round"/><circle cx="2054.8" cy="138.6" r="2.4" fill="#a3b1c4"/><circle cx="2070.5" cy="138.6" r="2.4" fill="#a3b1c4"/><polyline points="2323.2,125 2331.6,133.2 2340,125" fill="none" stroke="#ffffff" stroke-width="2.7" stroke-linecap="round" stroke-linejoin="round"/><path d="M365,277.6 H349.5 M356.2,270.8 L349,277.6 L356.2,284.4" fill="none" stroke="#4a5868" stroke-width="2.6" stroke-linecap="round" stroke-linejoin="round"/><g transform="translate(676.5,364.6) rotate(-45)" fill="#f28a42"><path d="M-13.9,0.2 Q-13,-3.1 -9.2,-3.4 H4.7 V3.4 H-9.6 Q-12.4,3 -13.9,0.2 Z"/><rect x="6.1" y="-3.5" width="5.6" height="7" rx="2.1"/></g><rect x="1959.8" y="338.8" width="153.4" height="43.6" rx="21.8" fill="#ffffff" stroke="#e0e6ee" stroke-width="1.7"/><circle cx="1992.2" cy="360.2" r="9.9" fill="#41c483"/><polyline points="1988.4,360.8 1991,363.3 1996,358.2" fill="none" stroke="#ffffff" stroke-width="2.1" stroke-linecap="round" stroke-linejoin="round"/><path d="M785.9,501.3 H785 Q783.3,501.3 783.3,503 V511.3 Q783.3,513 785,513 H791.5 Q793.1,513 793.1,511.4" fill="none" stroke="#4a5868" stroke-width="2.3" stroke-linecap="round" stroke-linejoin="round"/><path d="M789.7,494.9 H795.4 L798.9,498.5 V507.8 Q798.9,509.4 797.3,509.4 H789.7 Q788.1,509.4 788.1,507.8 V496.5 Q788.1,494.9 789.7,494.9 Z" fill="#4a5868"/><rect x="442" y="587.4" width="150.5" height="30.8" rx="15.4" fill="#4a8df2"/><path d="M569.4,597.6 L579.8,608.2 M579.8,597.6 L569.4,608.2" stroke="#ffffff" stroke-width="2.3" stroke-linecap="round"/><path d="M635.6,595 V611 M627.8,603 H643.6" stroke="#3a7fe9" stroke-width="2.5" stroke-linecap="round"/><rect x="1894.5" y="708.5" width="230" height="51" rx="5" fill="#ffffff" stroke="#d6dbe2" stroke-width="2"/><polyline points="2089.6,730.6 2096.4,737.6 2103.2,730.6" fill="none" stroke="#333" stroke-width="2.2" stroke-linecap="round" stroke-linejoin="round"/><polyline points="611.6,717.5 619.8,725.5 611.6,733.5" fill="none" stroke="#4a5868" stroke-width="2.4" stroke-linecap="round" stroke-linejoin="round"/><polyline points="611.6,800.3 619.8,808.3 611.6,816.3" fill="none" stroke="#4a5868" stroke-width="2.4" stroke-linecap="round" stroke-linejoin="round"/><polyline points="611.6,883.1 619.8,891.1 611.6,899.1" fill="none" stroke="#4a5868" stroke-width="2.4" stroke-linecap="round" stroke-linejoin="round"/><polyline points="611.6,965.9 619.8,973.9 611.6,981.9" fill="none" stroke="#4a5868" stroke-width="2.4" stroke-linecap="round" stroke-linejoin="round"/><polyline points="611.6,1048.7 619.8,1056.7 611.6,1064.7" fill="none" stroke="#4a5868" stroke-width="2.4" stroke-linecap="round" stroke-linejoin="round"/><polyline points="611.6,1131.5 619.8,1139.5 611.6,1147.5" fill="none" stroke="#4a5868" stroke-width="2.4" stroke-linecap="round" stroke-linejoin="round"/><polyline points="611.6,1214.3 619.8,1222.3 611.6,1230.3" fill="none" stroke="#4a5868" stroke-width="2.4" stroke-linecap="round" stroke-linejoin="round"/><polyline points="611.6,1297.1 619.8,1305.1 611.6,1313.1" fill="none" stroke="#4a5868" stroke-width="2.4" stroke-linecap="round" stroke-linejoin="round"/><polyline points="611.6,1379.9 619.8,1387.9 611.6,1395.9" fill="none" stroke="#4a5868" stroke-width="2.4" stroke-linecap="round" stroke-linejoin="round"/><path d="M382.7,718 V730.6 Q382.7,732.7 384.8,732.7 H399.8" fill="none" stroke="#b4bbc4" stroke-width="2.3" stroke-linecap="round"/><path d="M387.9,720.6 H394.9 M387.9,724.3 H392.3 M387.9,727.9 H397" stroke="#4a5868" stroke-width="2.2" stroke-linecap="round"/><circle cx="387.4" cy="805.0" r="4.3" fill="#4a5868"/><line x1="387.40" y1="800.55" x2="387.40" y2="809.45" stroke="#4a5868" stroke-width="2.9" stroke-linecap="round"/><line x1="391.25" y1="802.77" x2="383.55" y2="807.23" stroke="#4a5868" stroke-width="2.9" stroke-linecap="round"/><line x1="391.25" y1="807.23" x2="383.55" y2="802.77" stroke="#4a5868" stroke-width="2.9" stroke-linecap="round"/><circle cx="387.4" cy="805.0" r="1.6" fill="#e2e8f0"/><circle cx="398.9" cy="811.8" r="4.5" fill="#4a5868"/><line x1="394.10" y1="811.80" x2="403.70" y2="811.80" stroke="#4a5868" stroke-width="3.0" stroke-linecap="round"/><line x1="396.50" y1="807.64" x2="401.30" y2="815.96" stroke="#4a5868" stroke-width="3.0" stroke-linecap="round"/><line x1="401.30" y1="807.64" x2="396.50" y2="815.96" stroke="#4a5868" stroke-width="3.0" stroke-linecap="round"/><circle cx="398.9" cy="811.8" r="1.7" fill="#e2e8f0"/><polygon points="388.50,1129.60 390.18,1132.73 393.59,1131.71 392.57,1135.12 395.70,1136.80 392.57,1138.48 393.59,1141.89 390.18,1140.87 388.50,1144.00 386.82,1140.87 383.41,1141.89 384.43,1138.48 381.30,1136.80 384.43,1135.12 383.41,1131.71 386.82,1132.73" fill="#4a5868" stroke="#4a5868" stroke-width="0.8" stroke-linejoin="round"/><circle cx="387.3" cy="1135.2" r="1.3" fill="#e2e8f0"/><polygon points="400.20,1138.10 401.58,1140.27 404.09,1139.71 403.53,1142.22 405.70,1143.60 403.53,1144.98 404.09,1147.49 401.58,1146.93 400.20,1149.10 398.82,1146.93 396.31,1147.49 396.87,1144.98 394.70,1143.60 396.87,1142.22 396.31,1139.71 398.82,1140.27" fill="#4a5868" stroke="#4a5868" stroke-width="0.8" stroke-linejoin="round"/><circle cx="399.59999999999997" cy="1143.1999999999998" r="1.3" fill="#e2e8f0"/><g fill="none" stroke="#4a5868" stroke-width="1.4"><circle cx="390.9" cy="890.7" r="9.1"/><ellipse cx="390.9" cy="890.7" rx="4.1" ry="9.1"/><path d="M382.6,887.4 H399.2 M382.6,894 H399.2"/></g><g fill="none" stroke="#4a5868" stroke-linejoin="round" stroke-linecap="round"><path d="M389.9,965 Q391,963.9 392.1,965 L399.6,972.3 Q400.7,973.4 399.6,974.5 L392.1,981.8 Q391,982.9 389.9,981.8 L382.5,974.5 Q381.4,973.4 382.5,972.3 Z" stroke-width="1.8"/><path d="M388.6,975.6 V974.3 Q388.6,972.3 390.6,972.3 H394.6" stroke-width="1.8"/></g><path d="M393,969.4 L396,972.3 L393,975.2 Z" fill="#4a5868" stroke="#4a5868" stroke-width="0.8" stroke-linejoin="round"/><g fill="none" stroke="#4a5868" stroke-linecap="round" stroke-linejoin="round"><path d="M384.9,1050.2 A8.5,8.5 0 1 1 386.2,1062.8" stroke-width="2.2"/><path d="M391.1,1051.8 V1056.1 L393.8,1058.8" stroke-width="2"/></g><path d="M381.6,1047.4 V1053.3 H387.6 Z" fill="#4a5868" stroke="#4a5868" stroke-width="0.6" stroke-linejoin="round"/><path d="M386.9,1225.3 Q384.9,1221.4 389.6,1216.2 Q394.6,1212 400.4,1212.8 Q401.2,1218.6 396.8,1223.5 Q391.4,1228.1 386.9,1225.3 Z" fill="none" stroke="#4a5868" stroke-width="2.1"/><path d="M381.8,1222.6 Q383.2,1217.6 389.4,1216.9 L386.9,1223.2 Z M390.6,1231.2 Q395.6,1229.6 396.1,1223.6 L390.1,1226.2 Z" fill="#4a5868"/><circle cx="395.3" cy="1217.8" r="1.6" fill="#4a5868"/><g fill="#4a5868"><circle cx="386.8" cy="1297.9" r="3"/><circle cx="400.6" cy="1297.9" r="3"/><circle cx="393.6" cy="1303.3" r="3.4"/><path d="M381.6,1306.9 Q382,1302.2 386.6,1302.2 H388.4 Q389.2,1304.6 389.8,1306.9 Z"/><path d="M405.6,1306.9 Q405.2,1302.2 400.6,1302.2 H398.8 Q398,1304.6 397.4,1306.9 Z"/><path d="M386.4,1314.2 Q386.8,1308.4 392,1308.4 H395.2 Q400.4,1308.4 400.8,1314.2 Z"/></g><path d="M391.2,1378.7 L398.8,1381.9 Q399.2,1392.4 391.2,1398 Q383.2,1392.4 383.6,1381.9 Z" fill="none" stroke="#4a5868" stroke-width="2.3" stroke-linejoin="round"/><path d="M391.2,1378.7 L383.6,1381.9 Q383.2,1392.4 391.2,1398 Z" fill="#4a5868" stroke="#4a5868" stroke-width="2.3" stroke-linejoin="round"/><circle cx="2220.1" cy="1282.9" r="44.3" fill="#41c483"/><path d="M2220.3,1269.8 V1295.9 M2207,1283 H2233.6" stroke="#ffffff" stroke-width="3.3" stroke-linecap="round"/>
 </svg>
 <div class="t" style="left:264.50px;top:117.98px;font-size:22.7px;line-height:22.7px;color:#a3b4c8;font-weight:400;letter-spacing:0.072px;-webkit-text-stroke:0.5px #a3b4c8">Domeinen</div><div class="t" style="left:414.00px;top:117.98px;font-size:22.7px;line-height:22.7px;color:#eef1f5;font-weight:400;letter-spacing:-0.116px;-webkit-text-stroke:0.5px #eef1f5">Projecten</div><div class="t" style="left:530.64px;top:117.98px;font-size:22.7px;line-height:22.7px;color:#a3b4c8;font-weight:400;letter-spacing:0.000px;-webkit-text-stroke:0.5px #a3b4c8;transform:scaleX(0.9555);transform-origin:0 0">Servers</div><div class="t" style="left:627.40px;top:117.98px;font-size:22.7px;line-height:22.7px;color:#a3b4c8;font-weight:400;letter-spacing:0.248px;-webkit-text-stroke:0.5px #a3b4c8">Mail</div><div class="t" style="left:691.70px;top:117.98px;font-size:22.7px;line-height:22.7px;color:#a3b4c8;font-weight:400;letter-spacing:-0.188px;-webkit-text-stroke:0.5px #a3b4c8">Contacten</div><div class="t" style="left:839.40px;top:117.98px;font-size:22.7px;line-height:22.7px;color:#a3b4c8;font-weight:400;letter-spacing:0.000px;-webkit-text-stroke:0.5px #a3b4c8;transform:scaleX(0.9609);transform-origin:0 0">Tickets</div><div class="t" style="left:2109.43px;top:101.11px;font-size:23.5px;line-height:23.5px;color:#e9edf2;font-weight:400;letter-spacing:0.000px;-webkit-text-stroke:0.5px #e9edf2;transform:scaleX(0.9692);transform-origin:0 0">anne@rootnet.nl</div><div class="t" style="left:2109.40px;top:136.72px;font-size:17.7px;line-height:17.7px;color:#a3b4c8;font-weight:400;letter-spacing:0.011px;-webkit-text-stroke:0.5px #a3b4c8">Demobedrijf 1</div><div class="t" style="left:381.80px;top:267.18px;font-size:21.4px;line-height:21.4px;color:#4a5868;font-weight:400;letter-spacing:0.000px;-webkit-text-stroke:0.5px #4a5868;transform:scaleX(0.8100);transform-origin:0 0">TERUG NAAR PROJECTS</div><div class="t" style="left:381.07px;top:341.12px;font-size:49px;line-height:49px;color:#4a5868;font-weight:400;letter-spacing:0.000px;-webkit-text-stroke:0.5px #4a5868;transform:scaleX(0.9760);transform-origin:0 0">projectnaam</div><div class="t" style="left:2007.60px;top:349.65px;font-size:21.2px;line-height:21.2px;color:#4a5868;font-weight:400;letter-spacing:-0.226px;-webkit-text-stroke:0.5px #4a5868">Uitgerold</div><div class="t" style="left:381.70px;top:454.85px;font-size:19.9px;line-height:19.9px;color:#4a5868;font-weight:700;letter-spacing:0.000px;-webkit-text-stroke:0px #4a5868;transform:scaleX(0.8585);transform-origin:0 0">SSH</div><div class="t" style="left:865.50px;top:454.85px;font-size:19.9px;line-height:19.9px;color:#4a5868;font-weight:700;letter-spacing:-0.239px;-webkit-text-stroke:0px #4a5868">Server</div><div class="t" style="left:1188.50px;top:454.85px;font-size:19.9px;line-height:19.9px;color:#4a5868;font-weight:700;letter-spacing:-0.283px;-webkit-text-stroke:0px #4a5868">IP-adres(sen)</div><div class="t" style="left:1543.80px;top:454.85px;font-size:19.9px;line-height:19.9px;color:#4a5868;font-weight:700;letter-spacing:0.288px;-webkit-text-stroke:0px #4a5868">Template</div><div class="t" style="left:1698.00px;top:454.85px;font-size:19.9px;line-height:19.9px;color:#4a5868;font-weight:700;letter-spacing:0.038px;-webkit-text-stroke:0px #4a5868">Aangemaakt</div><div class="t" style="left:1902.04px;top:454.85px;font-size:19.9px;line-height:19.9px;color:#4a5868;font-weight:700;letter-spacing:0.000px;-webkit-text-stroke:0px #4a5868;transform:scaleX(0.9647);transform-origin:0 0">Disk usage</div><div class="t" style="left:381.34px;top:494.22px;font-size:21px;line-height:21px;color:#4a5868;font-weight:400;letter-spacing:0.000px;-webkit-text-stroke:0.5px #4a5868;transform:scaleX(0.9619);transform-origin:0 0">projectna_13@steady-mouse.sys.rootnet.io</div><div class="t" style="left:865.50px;top:494.22px;font-size:21px;line-height:21px;color:#2473ec;font-weight:400;letter-spacing:-0.248px;-webkit-text-stroke:0.5px #2473ec">steady-mouse.sys.rootnet.io</div><div class="t" style="left:1188.65px;top:494.22px;font-size:21px;line-height:21px;color:#4a5868;font-weight:400;letter-spacing:0.000px;-webkit-text-stroke:0.5px #4a5868;transform:scaleX(0.9549);transform-origin:0 0">185.173.20.37 | 2a0b:3100:20::c</div><div class="t" style="left:1542.83px;top:494.22px;font-size:21px;line-height:21px;color:#4a5868;font-weight:400;letter-spacing:0.000px;-webkit-text-stroke:0.5px #4a5868;transform:scaleX(0.9713);transform-origin:0 0">Node.js</div><div class="t" style="left:1698.00px;top:494.22px;font-size:21px;line-height:21px;color:#4a5868;font-weight:400;letter-spacing:0.000px;-webkit-text-stroke:0.5px #4a5868;transform:scaleX(0.9468);transform-origin:0 0">Vandaag, 09:19</div><div class="t" style="left:1902.07px;top:494.22px;font-size:21px;line-height:21px;color:#4a5868;font-weight:400;letter-spacing:0.000px;-webkit-text-stroke:0.5px #4a5868;transform:scaleX(0.9330);transform-origin:0 0">72 KB</div><div class="t" style="left:381.50px;top:593.55px;font-size:20.5px;line-height:20.5px;color:#4a5868;font-weight:700;letter-spacing:0.000px;-webkit-text-stroke:0px #4a5868;transform:scaleX(0.9489);transform-origin:0 0">Tags:</div><div class="t" style="left:452.60px;top:593.12px;font-size:21px;line-height:21px;color:#ffffff;font-weight:400;letter-spacing:-0.288px;-webkit-text-stroke:0.5px #ffffff">Klantnaam</div><div class="t" style="left:411.70px;top:715.32px;font-size:21px;line-height:21px;color:#4a5868;font-weight:400;letter-spacing:0.089px;-webkit-text-stroke:0.5px #4a5868">Metrics</div><div class="t" style="left:416.40px;top:798.12px;font-size:21px;line-height:21px;color:#4a5868;font-weight:400;letter-spacing:0.103px;-webkit-text-stroke:0.5px #4a5868">Instellingen</div><div class="t" style="left:412.20px;top:880.92px;font-size:21px;line-height:21px;color:#4a5868;font-weight:400;letter-spacing:0.021px;-webkit-text-stroke:0.5px #4a5868">Domeinnamen</div><div class="t" style="left:412.20px;top:963.72px;font-size:21px;line-height:21px;color:#4a5868;font-weight:400;letter-spacing:-0.283px;-webkit-text-stroke:0.5px #4a5868">Rewrites</div><div class="t" style="left:412.24px;top:1046.52px;font-size:21px;line-height:21px;color:#4a5868;font-weight:400;letter-spacing:0.000px;-webkit-text-stroke:0.5px #4a5868;transform:scaleX(0.9564);transform-origin:0 0">Backups</div><div class="t" style="left:416.50px;top:1129.32px;font-size:21px;line-height:21px;color:#4a5868;font-weight:400;letter-spacing:0.035px;-webkit-text-stroke:0.5px #4a5868">Malware alerts</div><div class="t" style="left:412.00px;top:1212.12px;font-size:21px;line-height:21px;color:#4a5868;font-weight:400;letter-spacing:0.063px;-webkit-text-stroke:0.5px #4a5868">Deployment tools</div><div class="t" style="left:416.80px;top:1294.92px;font-size:21px;line-height:21px;color:#4a5868;font-weight:400;letter-spacing:0.000px;-webkit-text-stroke:0.5px #4a5868;transform:scaleX(0.9725);transform-origin:0 0">Toegang</div><div class="t" style="left:412.00px;top:1377.72px;font-size:21px;line-height:21px;color:#4a5868;font-weight:400;letter-spacing:-0.236px;-webkit-text-stroke:0.5px #4a5868">Geoblocking</div><div class="t" style="left:1715.70px;top:724.56px;font-size:20.6px;line-height:20.6px;color:#4a5868;font-weight:400;letter-spacing:0.006px;-webkit-text-stroke:0.5px #4a5868">Weergeven voor:</div><div class="t" style="left:1906.00px;top:724.56px;font-size:20.6px;line-height:20.6px;color:#23272b;font-weight:400;letter-spacing:-0.065px;-webkit-text-stroke:0.5px #23272b">Afgelopen uur</div><div class="t" style="left:1377.46px;top:771.63px;font-size:26.9px;line-height:26.9px;color:#333333;font-weight:400;letter-spacing:0.000px;-webkit-text-stroke:0.5px #333333;transform:scaleX(0.8389);transform-origin:0 0">CPU</div><div class="t" style="left:1352.60px;top:1105.47px;font-size:26.5px;line-height:26.5px;color:#333333;font-weight:400;letter-spacing:0.170px;-webkit-text-stroke:0.5px #333333">Memory</div><div class="t" style="left:728.99px;top:825.49px;font-size:16.2px;line-height:16.2px;color:#666666;font-weight:400;letter-spacing:0.000px;-webkit-text-stroke:0.3px #666666">100%</div><div class="t" style="left:737.99px;top:890.29px;font-size:16.2px;line-height:16.2px;color:#666666;font-weight:400;letter-spacing:0.000px;-webkit-text-stroke:0.3px #666666">50%</div><div class="t" style="left:747.00px;top:955.69px;font-size:16.2px;line-height:16.2px;color:#666666;font-weight:400;letter-spacing:0.000px;-webkit-text-stroke:0.3px #666666">0%</div><div class="t" style="left:789.45px;top:974.29px;font-size:16.2px;line-height:16.2px;color:#666666;font-weight:400;letter-spacing:0.000px;-webkit-text-stroke:0.3px #666666">09:35</div><div class="t" style="left:895.65px;top:974.29px;font-size:16.2px;line-height:16.2px;color:#666666;font-weight:400;letter-spacing:0.000px;-webkit-text-stroke:0.3px #666666">09:40</div><div class="t" style="left:1001.85px;top:974.29px;font-size:16.2px;line-height:16.2px;color:#666666;font-weight:400;letter-spacing:0.000px;-webkit-text-stroke:0.3px #666666">09:45</div><div class="t" style="left:1108.05px;top:974.29px;font-size:16.2px;line-height:16.2px;color:#666666;font-weight:400;letter-spacing:0.000px;-webkit-text-stroke:0.3px #666666">09:50</div><div class="t" style="left:1214.25px;top:974.29px;font-size:16.2px;line-height:16.2px;color:#666666;font-weight:400;letter-spacing:0.000px;-webkit-text-stroke:0.3px #666666">09:55</div><div class="t" style="left:1319.95px;top:974.29px;font-size:16.2px;line-height:16.2px;color:#666666;font-weight:400;letter-spacing:0.000px;-webkit-text-stroke:0.3px #666666">10:00</div><div class="t" style="left:1426.15px;top:974.29px;font-size:16.2px;line-height:16.2px;color:#666666;font-weight:400;letter-spacing:0.000px;-webkit-text-stroke:0.3px #666666">10:05</div><div class="t" style="left:1532.35px;top:974.29px;font-size:16.2px;line-height:16.2px;color:#666666;font-weight:400;letter-spacing:0.000px;-webkit-text-stroke:0.3px #666666">10:10</div><div class="t" style="left:1638.55px;top:974.29px;font-size:16.2px;line-height:16.2px;color:#666666;font-weight:400;letter-spacing:0.000px;-webkit-text-stroke:0.3px #666666">10:15</div><div class="t" style="left:1744.75px;top:974.29px;font-size:16.2px;line-height:16.2px;color:#666666;font-weight:400;letter-spacing:0.000px;-webkit-text-stroke:0.3px #666666">10:20</div><div class="t" style="left:1850.95px;top:974.29px;font-size:16.2px;line-height:16.2px;color:#666666;font-weight:400;letter-spacing:0.000px;-webkit-text-stroke:0.3px #666666">10:25</div><div class="t" style="left:1957.15px;top:974.29px;font-size:16.2px;line-height:16.2px;color:#666666;font-weight:400;letter-spacing:0.000px;-webkit-text-stroke:0.3px #666666">10:30</div><div class="t" style="left:2044.99px;top:974.29px;font-size:16.2px;line-height:16.2px;color:#666666;font-weight:400;letter-spacing:0.000px;-webkit-text-stroke:0.3px #666666">10:35</div><div class="t" style="left:715.99px;top:1146.99px;font-size:16.2px;line-height:16.2px;color:#666666;font-weight:400;letter-spacing:0.000px;-webkit-text-stroke:0.3px #666666">100%</div><div class="t" style="left:724.99px;top:1212.79px;font-size:16.2px;line-height:16.2px;color:#666666;font-weight:400;letter-spacing:0.000px;-webkit-text-stroke:0.3px #666666">50%</div><div class="t" style="left:734.00px;top:1278.29px;font-size:16.2px;line-height:16.2px;color:#666666;font-weight:400;letter-spacing:0.000px;-webkit-text-stroke:0.3px #666666">0%</div><div class="t" style="left:776.65px;top:1297.29px;font-size:16.2px;line-height:16.2px;color:#666666;font-weight:400;letter-spacing:0.000px;-webkit-text-stroke:0.3px #666666">09:35</div><div class="t" style="left:884.00px;top:1297.29px;font-size:16.2px;line-height:16.2px;color:#666666;font-weight:400;letter-spacing:0.000px;-webkit-text-stroke:0.3px #666666">09:40</div><div class="t" style="left:991.35px;top:1297.29px;font-size:16.2px;line-height:16.2px;color:#666666;font-weight:400;letter-spacing:0.000px;-webkit-text-stroke:0.3px #666666">09:45</div><div class="t" style="left:1098.70px;top:1297.29px;font-size:16.2px;line-height:16.2px;color:#666666;font-weight:400;letter-spacing:0.000px;-webkit-text-stroke:0.3px #666666">09:50</div><div class="t" style="left:1206.05px;top:1297.29px;font-size:16.2px;line-height:16.2px;color:#666666;font-weight:400;letter-spacing:0.000px;-webkit-text-stroke:0.3px #666666">09:55</div><div class="t" style="left:1312.90px;top:1297.29px;font-size:16.2px;line-height:16.2px;color:#666666;font-weight:400;letter-spacing:0.000px;-webkit-text-stroke:0.3px #666666">10:00</div><div class="t" style="left:1420.25px;top:1297.29px;font-size:16.2px;line-height:16.2px;color:#666666;font-weight:400;letter-spacing:0.000px;-webkit-text-stroke:0.3px #666666">10:05</div><div class="t" style="left:1527.60px;top:1297.29px;font-size:16.2px;line-height:16.2px;color:#666666;font-weight:400;letter-spacing:0.000px;-webkit-text-stroke:0.3px #666666">10:10</div><div class="t" style="left:1634.95px;top:1297.29px;font-size:16.2px;line-height:16.2px;color:#666666;font-weight:400;letter-spacing:0.000px;-webkit-text-stroke:0.3px #666666">10:15</div><div class="t" style="left:1742.30px;top:1297.29px;font-size:16.2px;line-height:16.2px;color:#666666;font-weight:400;letter-spacing:0.000px;-webkit-text-stroke:0.3px #666666">10:20</div><div class="t" style="left:1849.65px;top:1297.29px;font-size:16.2px;line-height:16.2px;color:#666666;font-weight:400;letter-spacing:0.000px;-webkit-text-stroke:0.3px #666666">10:25</div><div class="t" style="left:1957.00px;top:1297.29px;font-size:16.2px;line-height:16.2px;color:#666666;font-weight:400;letter-spacing:0.000px;-webkit-text-stroke:0.3px #666666">10:30</div><div class="t" style="left:2045.99px;top:1297.29px;font-size:16.2px;line-height:16.2px;color:#666666;font-weight:400;letter-spacing:0.000px;-webkit-text-stroke:0.3px #666666">10:35</div><div class="t" style="left:1198.79px;top:1014.12px;font-size:18.4px;line-height:18.4px;color:#333333;font-weight:700;letter-spacing:0.000px;-webkit-text-stroke:0px #333333;transform:scaleX(0.9095);transform-origin:0 0">MySQL</div><div class="t" style="left:1314.30px;top:1014.12px;font-size:18.4px;line-height:18.4px;color:#333333;font-weight:700;letter-spacing:-0.095px;-webkit-text-stroke:0px #333333">supervisor-projectna_13</div><div class="t" style="left:1583.76px;top:1014.12px;font-size:18.4px;line-height:18.4px;color:#333333;font-weight:700;letter-spacing:0.000px;-webkit-text-stroke:0px #333333;transform:scaleX(0.9445);transform-origin:0 0">nginx</div><div class="t" style="left:1198.79px;top:1347.12px;font-size:18.4px;line-height:18.4px;color:#333333;font-weight:700;letter-spacing:0.000px;-webkit-text-stroke:0px #333333;transform:scaleX(0.9095);transform-origin:0 0">MySQL</div><div class="t" style="left:1314.30px;top:1347.12px;font-size:18.4px;line-height:18.4px;color:#333333;font-weight:700;letter-spacing:-0.095px;-webkit-text-stroke:0px #333333">supervisor-projectna_13</div><div class="t" style="left:1583.76px;top:1347.12px;font-size:18.4px;line-height:18.4px;color:#333333;font-weight:700;letter-spacing:0.000px;-webkit-text-stroke:0px #333333;transform:scaleX(0.9445);transform-origin:0 0">nginx</div><div class="t" style="left:1994.40px;top:108.42px;font-size:13.8px;line-height:13.8px;color:#ffffff;font-weight:700;letter-spacing:0.000px;-webkit-text-stroke:0px #ffffff;transform:scaleX(0.9698);transform-origin:0 0">43</div>
</div>
</body></html>
